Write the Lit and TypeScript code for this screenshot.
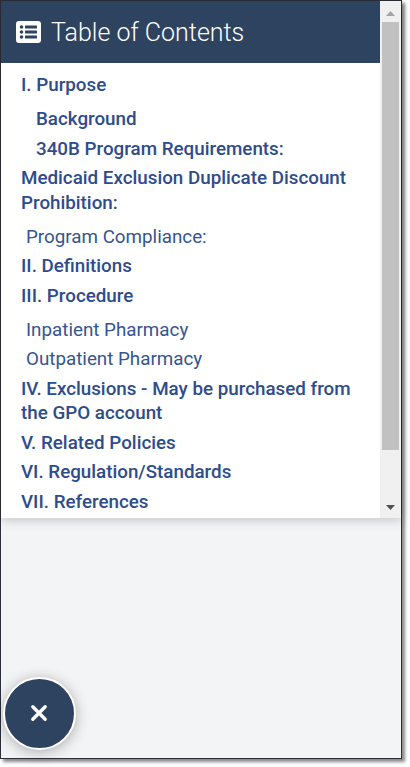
import { LitElement, html, css } from "lit";
import { customElement } from "lit/decorators.js";

type Item = { t: string; k: "b" | "sb" | "sn" | "l" };
const items: Item[] = [
  { t: "I. Purpose", k: "b" },
  { t: "Background", k: "sb" },
  { t: "340B Program Requirements:", k: "sb" },
  { t: "Medicaid Exclusion Duplicate Discount Prohibition:", k: "b" },
  { t: "Program Compliance:", k: "sn" },
  { t: "II. Definitions", k: "b" },
  { t: "III. Procedure", k: "b" },
  { t: "Inpatient Pharmacy", k: "sn" },
  { t: "Outpatient Pharmacy", k: "sn" },
  { t: "IV. Exclusions - May be purchased from the GPO account", k: "b" },
  { t: "V. Related Policies", k: "b" },
  { t: "VI. Regulation/Standards", k: "b" },
  { t: "VII. References", k: "b" },
];

@customElement("app-root")
export class AppRoot extends LitElement {
  static styles = css`
    :host { display: block; width: 410px; height: 767px; background: #fff; font-family: Roboto, sans-serif; overflow: hidden; }
    .frame { box-sizing: border-box; width: 402px; height: 759px; border: 1px solid #2b2f3a; background: #f3f4f6; box-shadow: 3px 3px 3px #8a8a8a; position: relative; display: flex; flex-direction: column; }
    .panel { height: 517px; display: flex; background: #fff; box-shadow: 0 2px 10px rgba(0,0,0,.2); }
    .main { flex: 1; min-width: 0; display: flex; flex-direction: column; }
    .head { height: 62px; background: #2e4360; color: #fff; display: flex; align-items: center; gap: 10px; padding: 0 15px; box-sizing: border-box; font-size: 25px; font-weight: 300; }
    .head svg { width: 25px; height: 22px; flex: none; }
    ul { list-style: none; margin: 0; padding: 10.3px 20px 0; display: flex; flex-direction: column; color: #2e4c8c; font-size: 18.8px; line-height: 24.4px; }
    li.b { font-weight: 500; margin-top: 5.1px; }
    li.sb { font-weight: 500; padding-left: 15px; margin-top: 5.1px; }
    li.sn { font-weight: 400; padding-left: 5px; margin-top: 5.1px; color: #35558f; }
    li.b + li.sb, li.b + li.sn { margin-top: 9.6px; }
    li:first-child { margin-top: 0; }
    .bar { width: 21px; flex: none; background: #f0f0f0; display: flex; flex-direction: column; align-items: center; }
    .bar svg { width: 9px; height: 5px; flex: none; }
    .up { margin-top: 10px; }
    .down { margin-top: auto; margin-bottom: 8px; }
    .thumb { width: 17px; height: 428px; margin-top: 6px; background: #c1c1c1; }
    .fab { position: absolute; left: 1.5px; bottom: 8px; width: 73.5px; height: 73.5px; box-sizing: border-box; border: 2px solid #fff; border-radius: 50%; background: #2e4360; box-shadow: 0 2px 14px rgba(0,0,0,.3); display: flex; align-items: center; justify-content: center; padding: 0; }
    .fab svg { width: 18px; height: 18px; }
  `;

  render() {
    return html`
      <div class="frame">
        <div class="panel">
          <div class="main">
            <div class="head">
              <svg viewBox="0 0 25 22"><rect width="25" height="22" rx="3" fill="#fff"/><g fill="#2e4360"><circle cx="5.5" cy="6" r="1.8"/><circle cx="5.5" cy="11" r="1.8"/><circle cx="5.5" cy="16" r="1.8"/><rect x="9" y="4.6" width="12" height="2.8" rx=".5"/><rect x="9" y="9.6" width="12" height="2.8" rx=".5"/><rect x="9" y="14.6" width="12" height="2.8" rx=".5"/></g></svg>
              <span>Table of Contents</span>
            </div>
            <ul>${items.map((i) => html`<li class=${i.k}>${i.t}</li>`)}</ul>
          </div>
          <div class="bar">
            <svg class="up" viewBox="0 0 9 5"><path d="M4.5 0L9 5H0z" fill="#a3a3a3"/></svg>
            <div class="thumb"></div>
            <svg class="down" viewBox="0 0 9 5"><path d="M0 0H9L4.5 5z" fill="#505050"/></svg>
          </div>
        </div>
        <button class="fab" aria-label="Close"><svg viewBox="0 0 16 16"><path d="M2.5 2.5L13.5 13.5M13.5 2.5L2.5 13.5" stroke="#fff" stroke-width="3" stroke-linecap="round"/></svg></button>
      </div>
    `;
  }
}
